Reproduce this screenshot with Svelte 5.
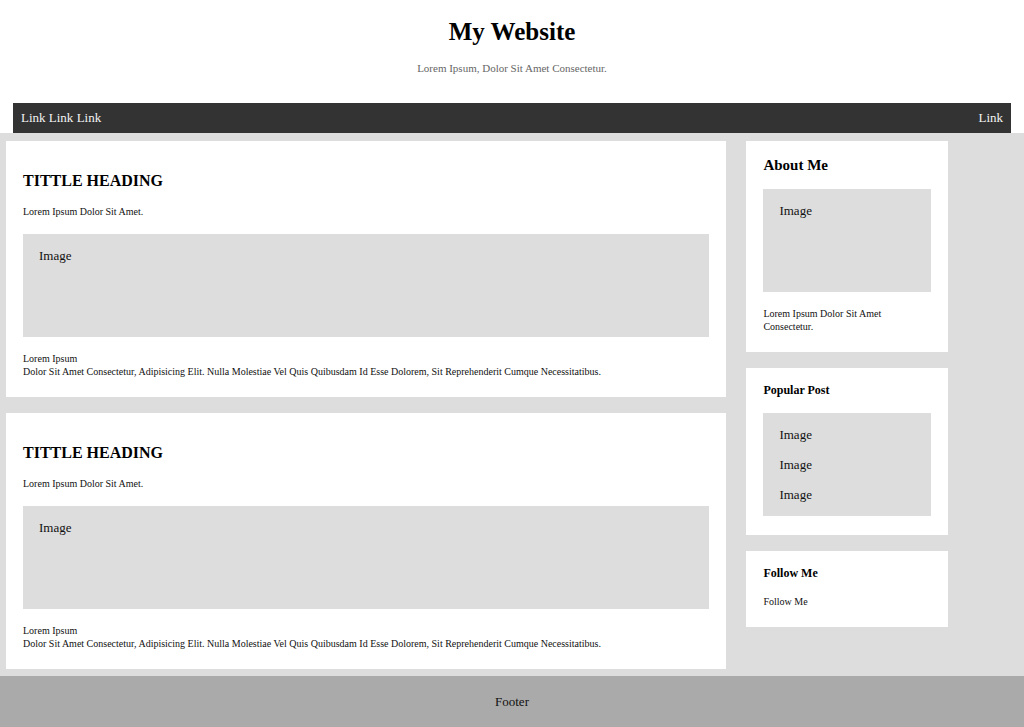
<script>
  const posts = [1, 2];
</script>

<div class="page">
  <header>
    <div class="brand">
      <h1>My Website</h1>
      <p>Lorem Ipsum, Dolor Sit Amet Consectetur.</p>
    </div>
    <nav>
      <div><a href="#one">Link</a> <a href="#two">Link</a> <a href="#three">Link</a></div>
      <a href="#four">Link</a>
    </nav>
  </header>

  <main>
    <div class="posts">
      {#each posts as post (post)}
        <article class="card post">
          <h2>TITTLE HEADING</h2>
          <p>Lorem Ipsum Dolor Sit Amet.</p>
          <div class="image">Image</div>
          <p>Lorem Ipsum<br />Dolor Sit Amet Consectetur, Adipisicing Elit. Nulla Molestiae Vel Quis Quibusdam Id Esse Dolorem, Sit Reprehenderit Cumque Necessitatibus.</p>
        </article>
      {/each}
    </div>

    <aside>
      <section class="card about">
        <h2>About Me</h2>
        <div class="image">Image</div>
        <p>Lorem Ipsum Dolor Sit Amet Consectetur.</p>
      </section>
      <section class="card">
        <h3>Popular Post</h3>
        <div class="image list">
          <span>Image</span>
          <span>Image</span>
          <span>Image</span>
        </div>
      </section>
      <section class="card follow">
        <h3>Follow Me</h3>
        <p>Follow Me</p>
      </section>
    </aside>
  </main>

  <footer>Footer</footer>
</div>

<style>
  :global(body) {
    margin: 0;
    background: #fff;
  }
  * {
    box-sizing: border-box;
  }
  .page {
    font: 13px/18px "Liberation Serif", "Times New Roman", serif;
    color: #111;
  }
  h1, h2, h3, p {
    margin: 0;
  }
  h1, h2, h3 {
    color: #000;
  }
  header {
    padding: 17px 13px 0;
  }
  .brand {
    text-align: center;
    padding-bottom: 27px;
  }
  h1 {
    font-size: 25px;
    line-height: 30px;
  }
  .brand p {
    margin-top: 13px;
    font-size: 11px;
    line-height: 16px;
    color: #666;
  }
  nav {
    display: flex;
    justify-content: space-between;
    padding: 6px 8px;
    background: #333;
    color: #f2f2f2;
  }
  nav a {
    color: inherit;
    text-decoration: none;
  }
  main {
    display: flex;
    align-items: flex-start;
    gap: 20px;
    padding: 8px 76px 7px 6px;
    background: #ddd;
  }
  .posts {
    flex: 1;
    min-width: 0;
  }
  aside {
    width: 21.4%;
  }
  .posts, aside {
    display: flex;
    flex-direction: column;
    gap: 16px;
  }
  .card {
    padding: 16px 17px 19px;
    background: #fff;
  }
  .card p {
    font-size: 10px;
    line-height: 13px;
  }
  .post {
    padding-top: 30px;
  }
  h2 {
    font-size: 16px;
    line-height: 20px;
  }
  .about h2 {
    font-size: 15px;
    line-height: 16px;
  }
  h3 {
    font-size: 12px;
    line-height: 13px;
  }
  .post h2 {
    margin-bottom: 14px;
  }
  .image {
    height: 103px;
    margin: 16px 0 15px;
    padding: 13px 16px;
    background: #ddd;
  }
  .list {
    display: flex;
    flex-direction: column;
    gap: 12px;
    margin-bottom: 0;
  }
  .follow p {
    margin-top: 15px;
  }
  footer {
    padding: 17px 17px 16px;
    background: #aaa;
    text-align: center;
  }
</style>
